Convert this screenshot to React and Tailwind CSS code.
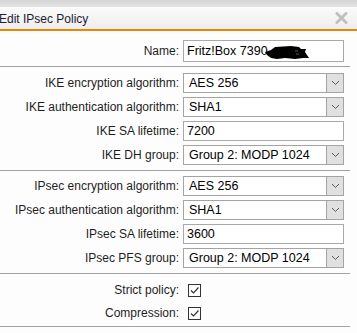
import React from "react";

const F = { fontFamily: '"Liberation Sans", Arial, sans-serif' };

function Label({ children }) {
  return (
    <div className="w-[180px] shrink-0 text-right text-[12px] leading-[14px] text-[#1e1e1e] pr-[1px]">
      {children}
    </div>
  );
}

function Chevron() {
  return (
    <svg width="9" height="6" viewBox="0 0 9 6">
      <path d="M1 1 L4.5 4.5 L8 1" fill="none" stroke="#5a5a5a" strokeWidth="1" />
    </svg>
  );
}

function Select({ value }) {
  return (
    <div className="w-[161px] h-[20px] flex border border-[#a4a4a4] bg-white">
      <div className="flex-1 pl-[5px] flex items-center text-[12.5px] text-black leading-none">{value}</div>
      <div className="w-[17px] h-full bg-[#e0e0e0] border-l border-[#a4a4a4] flex items-center justify-center">
        <Chevron />
      </div>
    </div>
  );
}

function TextInput({ value, h = "h-[20px]", children }) {
  return (
    <div className={`relative w-[161px] ${h} flex items-center border border-[#a9a9a9] bg-white pl-[3px] text-[12.5px] text-black leading-none`}>
      {value}
      {children}
    </div>
  );
}

function Row({ label, children }) {
  return (
    <div className="flex items-center gap-[3px] h-[20px]">
      <Label>{label}</Label>
      {children}
    </div>
  );
}

function Check() {
  return (
    <div className="w-[13px] h-[13px] border border-[#333] bg-white flex items-center justify-center ml-[5px]">
      <svg width="11" height="11" viewBox="0 0 11 11">
        <path d="M2 5.5 L4.5 8 L9.5 2.5" fill="none" stroke="#333" strokeWidth="1.2" />
      </svg>
    </div>
  );
}

function Sep() {
  return <div className="w-[350px] h-px bg-[#a3a3a3]" />;
}

export default function App() {
  return (
    <div style={F} className="w-[357px] h-[333px] bg-[#fdfdfd] overflow-hidden">
      <div className="h-[7px] bg-gradient-to-b from-[#d4d4d4] to-[#e4e4e4]" />
      <div className="h-[22px] bg-gradient-to-b from-[#fbfbfb] to-[#eeeeee] flex items-center justify-between">
        <div className="ml-[-1px] text-[12px] text-[#1a2030] leading-none pt-[1px]">Edit IPsec Policy</div>
        <svg width="13" height="12" viewBox="0 0 13 12" className="mr-[9px]">
          <path d="M2 1.5 L11 10.5 M11 1.5 L2 10.5" stroke="#c0c0c0" strokeWidth="3" strokeLinecap="round" />
        </svg>
      </div>
      <div className="h-[2px] bg-[#f08300]" />

      <div className="pt-[9px] pb-[4px]">
        <div className="flex items-center gap-[3px] h-[22px]">
          <Label>Name:</Label>
          <TextInput value="Fritz!Box 7390" h="h-[22px]">
            <svg className="absolute left-[81px] top-[5px]" width="46" height="14" viewBox="0 0 46 14">
              <path
                d="M0 6 L6 4 L10 1 L26 0 L34 1 L36 3 L41 3 L40 6 L42 9 L44 12 L38 12 L30 13 L20 12 L12 13 L6 12 L2 9 Z"
                fill="#000"
              />
              <path d="M30 5 L33 5 M31 8 L34 8" stroke="#555" strokeWidth="1" />
            </svg>
          </TextInput>
        </div>
      </div>
      <Sep />

      <div className="pt-[6px] pb-[5px] flex flex-col gap-[4px]">
        <Row label="IKE encryption algorithm:"><Select value="AES 256" /></Row>
        <Row label="IKE authentication algorithm:"><Select value="SHA1" /></Row>
        <Row label="IKE SA lifetime:"><TextInput value="7200" /></Row>
        <Row label="IKE DH group:"><Select value="Group 2: MODP 1024" /></Row>
      </div>
      <Sep />

      <div className="pt-[5px] pb-[5px] flex flex-col gap-[4px]">
        <Row label="IPsec encryption algorithm:"><Select value="AES 256" /></Row>
        <Row label="IPsec authentication algorithm:"><Select value="SHA1" /></Row>
        <Row label="IPsec SA lifetime:"><TextInput value="3600" /></Row>
        <Row label="IPsec PFS group:"><Select value="Group 2: MODP 1024" /></Row>
      </div>
      <Sep />

      <div className="pt-[6px] pb-[3px] flex flex-col gap-[3px]">
        <Row label="Strict policy:"><Check /></Row>
        <Row label="Compression:"><Check /></Row>
      </div>
      <Sep />
    </div>
  );
}
